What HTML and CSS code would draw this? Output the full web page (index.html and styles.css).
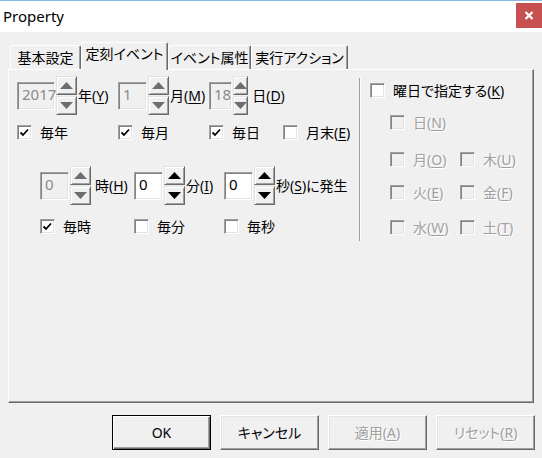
FILE: index.html
```html
<!DOCTYPE html>
<html lang="ja">
<head>
<meta charset="utf-8">
<title>Property</title>
<link rel="stylesheet" href="styles.css">
</head>
<body>
<div class="titlebar">
  <span class="title">Property</span>
  <div class="close"><svg width="10" height="9" viewBox="0 0 10 9"><path d="M1.5 1 L8.5 8 M8.5 1 L1.5 8" stroke="#fff" stroke-width="2.2"/></svg></div>
</div>
<div class="tabs">
  <div class="tab t1">基本設定</div>
  <div class="tab t2 active">定刻イベント</div>
  <div class="tab t3">イベント属性</div>
  <div class="tab t4">実行アクション</div>
</div>
<div class="panel">
  <div class="left">
    <div class="daterow">
      <div class="spin">
        <div class="edit wide disabled">2017</div>
        <div class="updown"><div class="sb"><svg class="arr" viewBox="0 0 13 7"><path d="M6.5 0 L13 7 L0 7 Z"/></svg></div><div class="sb"><svg class="arr" viewBox="0 0 13 7"><path d="M0 0 L13 0 L6.5 7 Z"/></svg></div></div>
        <span class="lbl">年(<u>Y</u>)</span>
      </div>
      <div class="spin">
        <div class="edit disabled">1</div>
        <div class="updown"><div class="sb"><svg class="arr" viewBox="0 0 13 7"><path d="M6.5 0 L13 7 L0 7 Z"/></svg></div><div class="sb"><svg class="arr" viewBox="0 0 13 7"><path d="M0 0 L13 0 L6.5 7 Z"/></svg></div></div>
        <span class="lbl">月(<u>M</u>)</span>
      </div>
      <div class="spin">
        <div class="edit disabled">18</div>
        <div class="updown"><div class="sb"><svg class="arr" viewBox="0 0 13 7"><path d="M6.5 0 L13 7 L0 7 Z"/></svg></div><div class="sb"><svg class="arr" viewBox="0 0 13 7"><path d="M0 0 L13 0 L6.5 7 Z"/></svg></div></div>
        <span class="lbl gap">日(<u>D</u>)</span>
      </div>
    </div>
    <div class="checkrow">
      <label class="check"><span class="cb"><svg class="tick" viewBox="0 0 13 13"><path d="M2.5 6.5 L5 9 L10 3.5"/></svg></span><span>毎年</span></label>
      <label class="check"><span class="cb"><svg class="tick" viewBox="0 0 13 13"><path d="M2.5 6.5 L5 9 L10 3.5"/></svg></span><span>毎月</span></label>
      <label class="check"><span class="cb"><svg class="tick" viewBox="0 0 13 13"><path d="M2.5 6.5 L5 9 L10 3.5"/></svg></span><span>毎日</span></label>
      <label class="check"><span class="cb"></span><span>月末(<u>E</u>)</span></label>
    </div>
    <div class="timerow">
      <div class="spin">
        <div class="edit disabled">0</div>
        <div class="updown"><div class="sb"><svg class="arr" viewBox="0 0 13 7"><path d="M6.5 0 L13 7 L0 7 Z"/></svg></div><div class="sb"><svg class="arr" viewBox="0 0 13 7"><path d="M0 0 L13 0 L6.5 7 Z"/></svg></div></div>
        <span class="lbl gap">時(<u>H</u>)</span>
      </div>
      <div class="spin">
        <div class="edit">0</div>
        <div class="updown on"><div class="sb"><svg class="arr" viewBox="0 0 13 7"><path d="M6.5 0 L13 7 L0 7 Z"/></svg></div><div class="sb"><svg class="arr" viewBox="0 0 13 7"><path d="M0 0 L13 0 L6.5 7 Z"/></svg></div></div>
        <span class="lbl">分(<u>I</u>)</span>
      </div>
      <div class="spin">
        <div class="edit">0</div>
        <div class="updown on"><div class="sb"><svg class="arr" viewBox="0 0 13 7"><path d="M6.5 0 L13 7 L0 7 Z"/></svg></div><div class="sb"><svg class="arr" viewBox="0 0 13 7"><path d="M0 0 L13 0 L6.5 7 Z"/></svg></div></div>
        <span class="lbl">秒(<u>S</u>)に発生</span>
      </div>
    </div>
    <div class="checkrow2">
      <label class="check"><span class="cb"><svg class="tick" viewBox="0 0 13 13"><path d="M2.5 6.5 L5 9 L10 3.5"/></svg></span><span>毎時</span></label>
      <label class="check"><span class="cb"></span><span>毎分</span></label>
      <label class="check"><span class="cb"></span><span>毎秒</span></label>
    </div>
  </div>
  <div class="divider"></div>
  <div class="right">
    <label class="check"><span class="cb"></span><span>曜日で指定する(<u>K</u>)</span></label>
    <div class="days">
      <label class="check off"><span class="cb"></span><span>日(<u>N</u>)</span></label>
      <span></span>
      <label class="check off"><span class="cb"></span><span>月(<u>O</u>)</span></label>
      <label class="check off"><span class="cb"></span><span>木(<u>U</u>)</span></label>
      <label class="check off"><span class="cb"></span><span>火(<u>E</u>)</span></label>
      <label class="check off"><span class="cb"></span><span>金(<u>F</u>)</span></label>
      <label class="check off"><span class="cb"></span><span>水(<u>W</u>)</span></label>
      <label class="check off"><span class="cb"></span><span>土(<u>T</u>)</span></label>
    </div>
  </div>
</div>
<div class="buttons">
  <div class="btn default">OK</div>
  <div class="btn">キャンセル</div>
  <div class="btn off"><span>適用(<u>A</u>)</span></div>
  <div class="btn off"><span>リセット(<u>R</u>)</span></div>
</div>
</body>
</html>
```

FILE: styles.css
```css
* { box-sizing: border-box; }
html, body { margin: 0; padding: 0; }
body {
  width: 542px;
  height: 458px;
  overflow: hidden;
  background: #f0f0f0;
  color: #000;
  font-family: "Noto Sans", "Noto Sans CJK JP", sans-serif;
  font-size: 14px;
  line-height: 16px;
  font-feature-settings: "palt";
}
u { text-decoration: underline; text-underline-offset: 2px; }

.titlebar {
  height: 32px;
  background: #fff;
  border-top: 1px solid #8ab8e8;
  display: flex;
  justify-content: space-between;
  align-items: flex-start;
}
.title {
  font-family: "Noto Sans", sans-serif;
  font-size: 15px;
  line-height: 20px;
  margin-top: 5px;
  padding-left: 3px;
}
.close {
  width: 26px;
  height: 25px;
  margin-top: 2px;
  background: #c75050;
  display: flex;
  align-items: center;
  justify-content: center;
}

.tabs {
  height: 37px;
  display: flex;
  align-items: flex-end;
  padding-left: 10px;
}
.tab {
  height: 24px;
  display: flex;
  justify-content: center;
  align-items: center;
  padding-top: 1px;
  border-top: 1px solid #fff;
  border-left: 1px solid #fff;
  border-right: 1px solid #696969;
  box-shadow: inset -1px 0 #a0a0a0;
  border-radius: 2px 2px 0 0;
}
.t1 { width: 71px; }
.t2 { width: 87px; }
.t3 { width: 83px; }
.t4 { width: 97px; }
.tab.active {
  height: 28px;
  margin-bottom: -1px;
  position: relative;
  z-index: 1;
  background: #f0f0f0;
  align-items: flex-start;
  padding-top: 3px;
}

.panel {
  margin-left: 8px;
  width: 526px;
  height: 334px;
  display: flex;
  border-top: 1px solid #fff;
  border-left: 1px solid #fff;
  border-right: 1px solid #696969;
  border-bottom: 1px solid #696969;
  box-shadow: inset -1px -1px #a0a0a0;
}
.left {
  width: 350px;
  padding: 6px 0 0 8px;
}
.daterow {
  display: grid;
  grid-template-columns: 101px 91px 74px;
  height: 39px;
  align-items: center;
}
.checkrow {
  display: grid;
  grid-template-columns: 101px 91px 74px auto;
  margin-top: 10px;
  height: 15px;
  align-items: center;
}
.timerow {
  display: grid;
  grid-template-columns: 94px 90px auto;
  padding-left: 23px;
  margin-top: 26px;
  height: 39px;
  align-items: center;
}
.checkrow2 {
  display: grid;
  grid-template-columns: 94px 90px auto;
  padding-left: 23px;
  margin-top: 14px;
  height: 15px;
  align-items: center;
}

.spin { display: flex; align-items: center; height: 39px; }
.edit {
  width: 29px;
  height: 28px;
  background: #fff;
  border-top: 1px solid #a0a0a0;
  border-left: 1px solid #a0a0a0;
  border-right: 1px solid #fff;
  border-bottom: 1px solid #fff;
  box-shadow: inset 1px 1px #828282, inset -1px -1px #e3e3e3;
  padding: 3px 0 0 4px;
  font-size: 15px;
  line-height: 17px;
}
.edit.wide { width: 38px; }
.edit.disabled { background: #f0f0f0; color: #8a8a8a; }
.updown {
  width: 21px;
  height: 39px;
  margin-left: 1px;
  display: flex;
  flex-direction: column;
  justify-content: space-between;
}
.sb {
  height: 19px;
  background: #f0f0f0;
  border: 1px solid;
  border-color: #e3e3e3 #696969 #696969 #e3e3e3;
  box-shadow: inset 1px 1px #fff, inset -1px -1px #a0a0a0;
  display: flex;
  align-items: center;
  justify-content: center;
}
.arr { width: 13px; height: 7px; fill: #6d6d6d; display: block; }
.updown.on .arr { fill: #000; }
.lbl { margin-left: 1px; white-space: nowrap; }
.lbl.gap { margin-left: 4px; }

.check {
  display: flex;
  align-items: center;
  gap: 8px;
  white-space: nowrap;
  height: 15px;
}
.cb {
  width: 15px;
  height: 15px;
  flex: none;
  background: #fff;
  border-top: 1px solid #a0a0a0;
  border-left: 1px solid #a0a0a0;
  border-right: 1px solid #fff;
  border-bottom: 1px solid #fff;
  box-shadow: inset 1px 1px #828282, inset -1px -1px #e3e3e3;
}
.tick { width: 13px; height: 13px; display: block; fill: none; stroke: #000; stroke-width: 1.8; }
.check.off { color: #a0a0a0; text-shadow: 1px 1px 0 #fff; }
.check.off .cb { background: #f0f0f0; }

.divider {
  width: 2px;
  height: 163px;
  margin-top: 8px;
  border-left: 1px solid #a0a0a0;
  border-right: 1px solid #fff;
}
.right { padding: 13px 0 0 9px; }
.days {
  display: grid;
  grid-template-columns: 70px auto;
  grid-template-rows: 37px 33px 35px 15px;
  align-items: start;
  padding-left: 20px;
  margin-top: 17px;
}

.buttons {
  display: flex;
  justify-content: flex-end;
  gap: 9px;
  padding-right: 7px;
  margin-top: 12px;
}
.btn {
  width: 99px;
  height: 35px;
  display: flex;
  align-items: center;
  justify-content: center;
  background: #f0f0f0;
  border: 1px solid;
  border-color: #fff #696969 #696969 #fff;
  box-shadow: inset -1px -1px #a0a0a0, inset 1px 1px #e3e3e3;
}
.btn.default {
  border: 1px solid #000;
  box-shadow: inset 1px 1px #fff, inset -1px -1px #696969, inset -2px -2px #a0a0a0;
}
.btn.off { color: #a0a0a0; text-shadow: 1px 1px 0 #fff; }
```
